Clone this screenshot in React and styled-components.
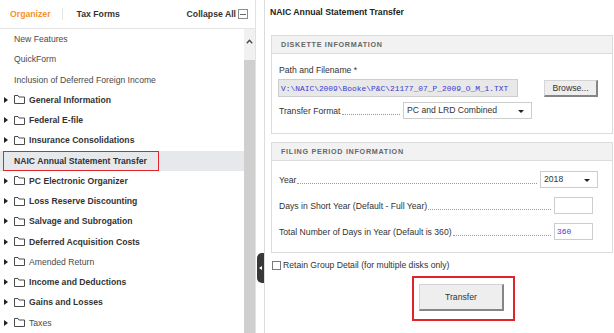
import React from 'react'
import styled, { createGlobalStyle } from 'styled-components'

const GlobalStyle = createGlobalStyle`
  html, body {
    margin: 0;
    padding: 0;
    background: #fff;
  }
  body {
    font-family: "Liberation Sans", Arial, sans-serif;
    font-size: 8.65px;
    color: #333;
  }
  * {
    box-sizing: border-box;
  }
`

const Page = styled.div`
  display: flex;
  width: 614px;
  height: 333px;
  overflow: hidden;
`

/* ---------- left organizer ---------- */

const Sidebar = styled.aside`
  width: 256px;
  flex-shrink: 0;
  display: flex;
  flex-direction: column;
  border-right: 1px solid #e2e2e2;
`

const SideHeader = styled.div`
  height: 29px;
  flex-shrink: 0;
  display: flex;
  align-items: center;
  padding: 0 7px 0 10px;
  border-bottom: 1px solid #e4e4e4;
  font-weight: bold;
  font-size: 8.7px;
`

const Tab = styled.span`
  color: ${p => (p.active ? '#f5922b' : '#333')};
`

const TabSeparator = styled.span`
  width: 1px;
  height: 12px;
  background: #e6e6e6;
  margin: 0 14px 0 11px;
`

const Collapse = styled.span`
  margin-left: auto;
  display: flex;
  align-items: center;
  gap: 2px;
  color: #333;
`

const CollapseBox = styled.span`
  width: 10px;
  height: 10px;
  border: 1px solid #8c8c8c;
  display: flex;
  align-items: center;
  justify-content: center;
  &::before {
    content: '';
    width: 6px;
    height: 1px;
    background: #666;
  }
`

const SideBody = styled.div`
  flex: 1;
  display: flex;
  min-height: 0;
`

const Tree = styled.ul`
  list-style: none;
  margin: 0;
  padding: 0;
  width: 244px;
  overflow: hidden;
`

const TreeRow = styled.li`
  height: 20.25px;
  display: flex;
  align-items: center;
  padding-left: ${p => (p.folder ? '4px' : '14px')};
  background: ${p => (p.selected ? '#e6e8ec' : 'transparent')};
  font-weight: ${p => (p.bold ? 'bold' : 'normal')};
  color: ${p => (p.bold ? '#333' : '#4a4a4a')};
  white-space: nowrap;
`

const SelectedMark = styled.span`
  height: 100%;
  width: 156px;
  margin-left: -11px;
  padding-left: 10px;
  display: flex;
  align-items: center;
  border: 1.5px solid #e3232c;
`

const Caret = styled.svg`
  width: 4px;
  height: 6px;
  margin-right: 6px;
  flex-shrink: 0;
`

const Folder = styled.svg`
  width: 11px;
  height: 9px;
  margin-right: 4px;
  flex-shrink: 0;
`

const Scrollbar = styled.div`
  width: 11px;
  display: flex;
  flex-direction: column;
`

const ScrollUp = styled.div`
  height: 31px;
  background: #f1f1f1;
  display: flex;
  justify-content: center;
  padding-top: 10px;
`

const ScrollThumb = styled.div`
  flex: 1;
  background: #cfcfcf;
`

/* ---------- splitter ---------- */

const Splitter = styled.div`
  width: 9px;
  flex-shrink: 0;
  border-right: 1px solid #dcdcdc;
  display: flex;
  flex-direction: column;
  align-items: flex-end;
  padding-top: 253px;
`

const Handle = styled.div`
  width: 7px;
  height: 30px;
  background: #383838;
  border-radius: 5px 0 0 5px;
  display: flex;
  align-items: center;
  justify-content: center;
  &::before {
    content: '';
    border-style: solid;
    border-width: 2.5px 3px 2.5px 0;
    border-color: transparent #fff transparent transparent;
  }
`

/* ---------- right form ---------- */

const Main = styled.main`
  flex: 1;
  padding: 0 5px;
  display: flex;
  flex-direction: column;
`

const Title = styled.h1`
  margin: 0 0 10px;
  height: 25px;
  line-height: 25px;
  font-size: 8.7px;
  font-weight: bold;
  color: #222;
`

const Section = styled.section`
  margin: ${p => (p.first ? '0' : '8px')} 0 0 1px;
  border: 1px solid #dcdcdc;
`

const SectionHead = styled.div`
  height: 18px;
  line-height: 17px;
  background: #f2f2f2;
  border-bottom: 1px solid #dcdcdc;
  padding-left: 9px;
  font-size: 7.2px;
  font-weight: bold;
  letter-spacing: 0.7px;
  color: #666;
`

const SectionBody = styled.div`
  padding: ${p => p.pad};
  display: flex;
  flex-direction: column;
  gap: ${p => p.gap || '0'};
`

const FieldLabel = styled.div`
  line-height: 11px;
  margin: 0 0 3px 1px;
`

const Row = styled.div`
  display: flex;
  align-items: center;
  height: ${p => p.h || '17px'};
  margin-top: ${p => p.mt || '0'};
  width: ${p => p.w || 'auto'};
`

const RowLabel = styled.span`
  white-space: nowrap;
  padding-left: 1px;
`

const Leader = styled.span`
  flex: 1;
  align-self: stretch;
  margin: 0 3px 4px 1px;
  border-bottom: 1px dotted #9a9a9a;
`

const TextBox = styled.div`
  width: ${p => p.w};
  height: ${p => p.h || '17px'};
  margin-right: ${p => p.mr || '0'};
  border: 1px solid #cdcdcd;
  background: ${p => (p.readOnly ? '#e8e8e8' : '#fff')};
  font-family: "Liberation Mono", "Courier New", monospace;
  font-size: 7.9px;
  color: #3b3bd0;
  display: flex;
  align-items: center;
  padding-left: 2px;
  white-space: nowrap;
  overflow: hidden;
`

const Select = styled.div`
  width: ${p => p.w};
  height: 17px;
  border: 1px solid #cdcdcd;
  background: #fff;
  display: flex;
  align-items: flex-start;
  padding: 2px 7px 0 3px;
  color: #333;
  &::after {
    content: '';
    margin: 5px 0 0 auto;
    border-style: solid;
    border-width: 3px 3.5px 0 3.5px;
    border-color: #222 transparent transparent transparent;
  }
`

const Button = styled.button`
  width: ${p => p.w};
  height: ${p => p.h};
  margin-left: ${p => p.ml || '0'};
  font-family: inherit;
  font-size: 8.7px;
  color: #333;
  background: #eeeeee;
  border-style: solid;
  border-color: #d4d4d4 #858585 #858585 #d4d4d4;
  border-width: 1px 2px 2px 1px;
  padding: 0;
`

const CheckRow = styled.label`
  display: flex;
  align-items: center;
  margin: 7px 0 0 2px;
  line-height: 11px;
  gap: 2px;
`

const CheckBox = styled.span`
  width: 9px;
  height: 9px;
  border: 1px solid #7a7a7a;
  background: #fff;
`

const Callout = styled.div`
  align-self: flex-start;
  margin: 5px 0 0 142px;
  border: 2px solid #e3232c;
  padding: 6px 9px 8px 5px;
`

const folders = [
  { label: 'General Information', bold: true },
  { label: 'Federal E-file', bold: true },
  { label: 'Insurance Consolidations', bold: true },
  { label: 'NAIC Annual Statement Transfer', bold: true, plain: true, selected: true },
  { label: 'PC Electronic Organizer', bold: true },
  { label: 'Loss Reserve Discounting', bold: true },
  { label: 'Salvage and Subrogation', bold: true },
  { label: 'Deferred Acquisition Costs', bold: true },
  { label: 'Amended Return', bold: false },
  { label: 'Income and Deductions', bold: true },
  { label: 'Gains and Losses', bold: true },
  { label: 'Taxes', bold: false },
]

const FolderIcon = () => (
  <Folder viewBox="0 0 11 9">
    <path d="M0.5 0.5 H4 L5 2 H10.5 V8.5 H0.5 Z" fill="none" stroke="#4a4a4a" strokeWidth="1" />
  </Folder>
)

const TreeItem = ({ label, bold, plain, selected }) => {
  if (plain) {
    return (
      <TreeRow bold={bold} selected={selected}>
        {selected ? <SelectedMark>{label}</SelectedMark> : label}
      </TreeRow>
    )
  }
  return (
    <TreeRow folder bold={bold}>
      <Caret viewBox="0 0 4 6">
        <polygon points="0,0 4,3 0,6" fill="#222" />
      </Caret>
      <FolderIcon />
      {label}
    </TreeRow>
  )
}

export default function App() {
  return (
    <>
      <GlobalStyle />
      <Page>
        <Sidebar>
          <SideHeader>
            <Tab active>Organizer</Tab>
            <TabSeparator />
            <Tab>Tax Forms</Tab>
            <Collapse>
              Collapse All
              <CollapseBox />
            </Collapse>
          </SideHeader>
          <SideBody>
            <Tree>
              <TreeRow>New Features</TreeRow>
              <TreeRow>QuickForm</TreeRow>
              <TreeRow>Inclusion of Deferred Foreign Income</TreeRow>
              {folders.map(f => (
                <TreeItem key={f.label} {...f} />
              ))}
            </Tree>
            <Scrollbar>
              <ScrollUp>
                <svg width="7" height="5" viewBox="0 0 7 5">
                  <path d="M0.8 4.2 L3.5 1.3 L6.2 4.2" fill="none" stroke="#4a4a4a" strokeWidth="1.4" />
                </svg>
              </ScrollUp>
              <ScrollThumb />
            </Scrollbar>
          </SideBody>
        </Sidebar>

        <Splitter>
          <Handle />
        </Splitter>

        <Main>
          <Title>NAIC Annual Statement Transfer</Title>

          <Section first>
            <SectionHead>DISKETTE INFORMATION</SectionHead>
            <SectionBody pad="11px 14px 14px 6px">
              <FieldLabel>Path and Filename *</FieldLabel>
              <Row h="18px">
                <TextBox readOnly w="240px" h="18px">
                  V:\NAIC\2009\Booke\P&amp;C\21177_07_P_2009_O_M_1.TXT
                </TextBox>
                <Button w="54px" h="17px" ml="26px">Browse...</Button>
              </Row>
              <Row mt="5px" w="254px">
                <RowLabel>Transfer Format</RowLabel>
                <Leader />
                <Select w="129px">PC and LRD Combined</Select>
              </Row>
            </SectionBody>
          </Section>

          <Section>
            <SectionHead>FILING PERIOD INFORMATION</SectionHead>
            <SectionBody pad="10px 14px 12px 6px" gap="9px">
              <Row>
                <RowLabel>Year</RowLabel>
                <Leader />
                <Select w="58px">2018</Select>
              </Row>
              <Row>
                <RowLabel>Days in Short Year (Default - Full Year)</RowLabel>
                <Leader />
                <TextBox w="39px" mr="5px" />
              </Row>
              <Row>
                <RowLabel>Total Number of Days in Year (Default is 360)</RowLabel>
                <Leader />
                <TextBox w="39px" mr="5px">360</TextBox>
              </Row>
            </SectionBody>
          </Section>

          <CheckRow>
            <CheckBox />
            Retain Group Detail (for multiple disks only)
          </CheckRow>

          <Callout>
            <Button w="85px" h="27px">Transfer</Button>
          </Callout>
        </Main>
      </Page>
    </>
  )
}
